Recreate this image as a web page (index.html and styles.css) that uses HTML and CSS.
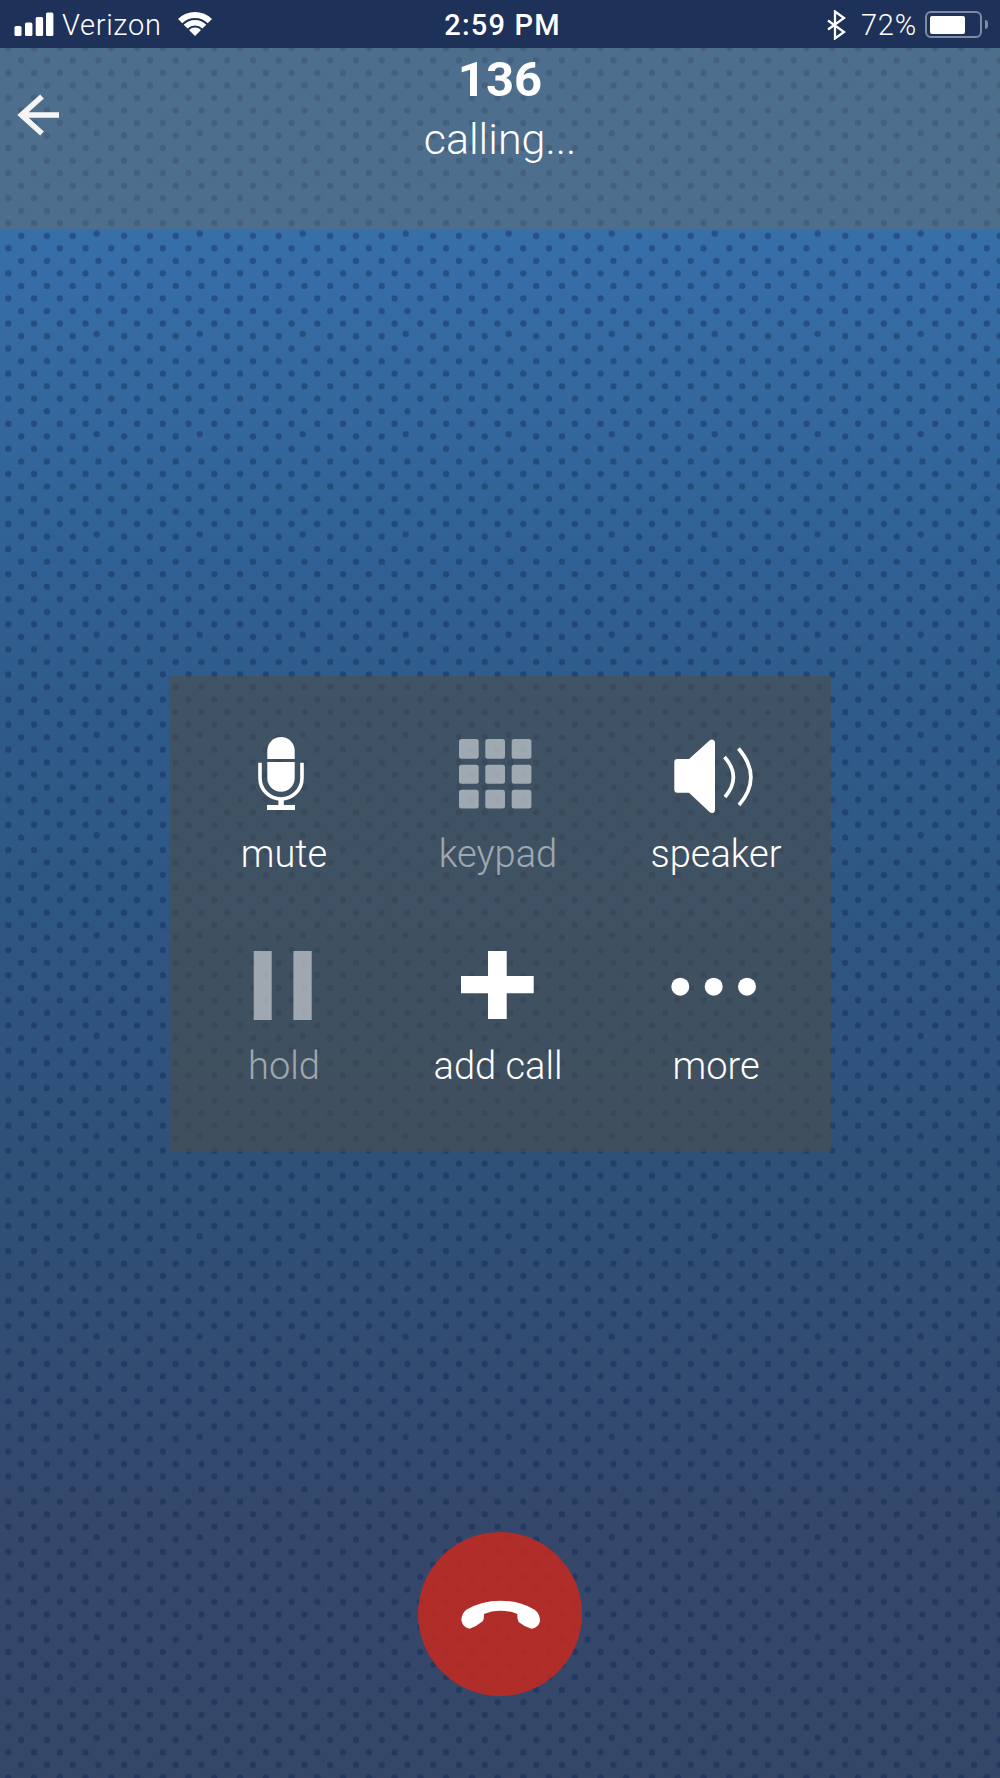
FILE: index.html
```html
<!DOCTYPE html>
<html>
<head>
    <title>calling</title>
    <link rel="stylesheet" href="styles.css">
</head>
<body>
    <div class="screen">
        <div class="status">
            <div class="status-left">
                <svg class="signal" width="40" height="25" viewBox="14 12 40 25">
                    <rect x="14.5" y="26" width="7" height="10" rx="1.5"/>
                    <rect x="25" y="22.5" width="7.4" height="13.5" rx="1.5"/>
                    <rect x="35.7" y="17" width="7.4" height="19" rx="1.5"/>
                    <rect x="46" y="12.5" width="7.4" height="23.5" rx="1.5"/>
                </svg>
                <span class="carrier">Verizon</span>
                <svg class="wifi" width="36" height="25" viewBox="175.3 12 36 25">
                    <path d="M176.33 19.03A24 24 0 0 1 210.27 19.03L206.03 23.27A18 18 0 0 0 180.57 23.27Z"/>
                    <path d="M181.99 24.69A16 16 0 0 1 204.61 24.69L200.72 28.58A10.5 10.5 0 0 0 185.88 28.58Z"/>
                    <path d="M187.29 29.99A8.5 8.5 0 0 1 199.31 29.99L193.3 36Z"/>
                </svg>
            </div>
            <div class="time">2:59 PM</div>
            <div class="status-right">
                <svg class="bluetooth" width="20" height="30" viewBox="827 10 20 30">
                    <path d="M829 20.5L845 32L836 38.5V11.5L845 18L829 29.5"/>
                </svg>
                <span class="percent">72%</span>
                <div class="battery"><div class="battery-fill"></div></div>
                <div class="battery-nub"></div>
            </div>
        </div>

        <div class="header">
            <svg class="back" width="48" height="45" viewBox="15 93 48 45">
                <path d="M59 115H21M42 96.5L21.5 115L42 133.5"/>
            </svg>
            <div class="caller">
                <div class="caller-name">136</div>
                <div class="caller-state">calling...</div>
            </div>
        </div>

        <div class="panel">
            <div class="ctrl">
                <svg class="icon" viewBox="234 733 100 84">
                    <path d="M267.3 759V750.7a13.7 13.7 0 0 1 27.4 0V759Z"/>
                    <path d="M267.3 762H294.7V778a13.7 13.7 0 0 1 -27.4 0Z"/>
                    <path class="line" d="M260 762.7V778a21 21 0 0 0 42 0V762.7"/>
                    <rect x="278.4" y="800" width="5.4" height="6"/>
                    <rect x="267" y="805" width="28" height="5"/>
                </svg>
                <span class="ctrl-label">mute</span>
            </div>
            <div class="ctrl off">
                <svg class="icon" viewBox="448 733 100 84">
                    <rect x="459" y="739" width="19.7" height="19.7" rx="2.5"/>
                    <rect x="485.3" y="739" width="19.7" height="19.7" rx="2.5"/>
                    <rect x="511.7" y="739" width="19.7" height="19.7" rx="2.5"/>
                    <rect x="459" y="764.7" width="19.7" height="19" rx="2.5"/>
                    <rect x="485.3" y="764.7" width="19.7" height="19" rx="2.5"/>
                    <rect x="511.7" y="764.7" width="19.7" height="19" rx="2.5"/>
                    <rect x="459" y="789.7" width="19.7" height="18.7" rx="2.5"/>
                    <rect x="485.3" y="789.7" width="19.7" height="18.7" rx="2.5"/>
                    <rect x="511.7" y="789.7" width="19.7" height="18.7" rx="2.5"/>
                </svg>
                <span class="ctrl-label">keypad</span>
            </div>
            <div class="ctrl">
                <svg class="icon" viewBox="666 733 100 84">
                    <path d="M674.3 762q0 -3 3 -3H689L709.5 740.5q2 -1.5 4 -.5q1.5 .8 1.5 3V809.5q0 2.5 -1.5 3.2q-2 1 -4 -.7L689 792.7H677.3q-3 0 -3 -3Z"/>
                    <path class="line" d="M724.5 757Q742 777 725 797"/>
                    <path class="line" d="M738.5 748.5Q763 777 739 805"/>
                </svg>
                <span class="ctrl-label">speaker</span>
            </div>
            <div class="ctrl off">
                <svg class="icon" viewBox="234 945 100 84">
                    <rect x="253.7" y="951" width="18" height="69"/>
                    <rect x="293.4" y="951" width="18.3" height="69"/>
                </svg>
                <span class="ctrl-label">hold</span>
            </div>
            <div class="ctrl">
                <svg class="icon" viewBox="448 945 100 84">
                    <path d="M488 951H506.7V976H533.7V993.3H506.7V1019H488V993.3H461V976H488Z"/>
                </svg>
                <span class="ctrl-label">add call</span>
            </div>
            <div class="ctrl">
                <svg class="icon" viewBox="666 945 100 84">
                    <circle cx="680.3" cy="986.7" r="9"/>
                    <circle cx="713.7" cy="986.7" r="9"/>
                    <circle cx="747" cy="986.7" r="9"/>
                </svg>
                <span class="ctrl-label">more</span>
            </div>
        </div>

        <div class="hangup">
            <svg width="85" height="35" viewBox="170 225 255 105">
                <path d="M205 320Q185 318 180 295Q180 275 195 263Q240 236 297 236Q355 236 400 263Q416 275 416 297Q412 318 390 320Q370 315 352 300Q347 290 348 276Q325 266 297 266Q270 266 248 276Q249 290 244 298Q225 314 205 320Z"/>
            </svg>
        </div>
    </div>
</body>
</html>
```

FILE: styles.css
```css
*{margin: 0; padding: 0; box-sizing: border-box;}
body{font-family: Roboto, "Liberation Sans", sans-serif; color: #fff;}

.screen{width: 1000px; height: 1778px; overflow: hidden;
    background-image:
        url("data:image/svg+xml,%3Csvg xmlns='http://www.w3.org/2000/svg' width='1000' height='1778'%3E%3Cdefs%3E%3Cpattern id='d' y='3.1' width='103' height='100.27' patternUnits='userSpaceOnUse'%3E%3Cpath fill='none' stroke='rgba(10,35,80,.38)' stroke-width='6.4' stroke-linecap='round' d='M21.2 7.1h0M46.95 7.1h0M72.7 7.1h0M98.45 7.1h0M8.3 19.63h0M34.05 19.63h0M59.8 19.63h0M85.55 19.63h0M21.2 32.17h0M46.95 32.17h0M72.7 32.17h0M96.7 30h0M8.3 44.7h0M34.05 44.7h0M59.8 44.7h0M85.55 44.7h0M21.2 57.23h0M46.95 57.23h0M72.7 57.23h0M98.45 57.23h0M8.3 69.77h0M34.05 69.77h0M59.8 69.77h0M85.55 69.77h0M21.2 82.3h0M46.95 82.3h0M72.7 82.3h0M98.45 82.3h0M8.3 94.83h0M34.05 94.83h0M59.8 94.83h0M85.55 94.83h0'/%3E%3C/pattern%3E%3C/defs%3E%3Crect width='1000' height='1778' fill='url(%23d)'/%3E%3C/svg%3E"),
        linear-gradient(#376fa9 0, #376fa9 229px, #2e5b8b 700px, #2f5077 1200px, #34486c 1500px, #344769 1778px);
    background-repeat: no-repeat;}

/* status bar */
.status{height: 48px; background: #1e3158; padding: 0 12px 0 14px;
    display: grid; grid-template-columns: 1fr auto 1fr; align-items: start;
    font-size: 29px; line-height: 48px;}
.status svg{fill: #fff; flex: none;}
.status-left{display: flex; align-items: flex-start;}
.signal{margin-top: 12px;}
.carrier{margin: 1px 0 0 8px; letter-spacing: .7px; font-weight: 300;}
.wifi{margin: 12px 0 0 15px;}
.time{font-weight: 500; margin: 1px 0 0 3px; letter-spacing: 1.2px;}
.status-right{display: flex; align-items: flex-start; justify-content: flex-end;}
.status .bluetooth{fill: none; stroke: #fff; stroke-width: 2.3; margin-top: 10px;}
.percent{margin: 1px 0 0 15px; font-weight: 300; letter-spacing: .8px;}
.battery{width: 57px; height: 27px; margin: 11px 0 0 8px; padding: 2.5px;
    border: 2px solid #7e8ba3; border-radius: 6px;}
.battery-fill{width: 35px; height: 18px; background: #fff; border-radius: 2px;}
.battery-nub{width: 3px; height: 9px; margin: 20px 0 0 3px; background: #7e8ba3;
    border-radius: 0 3px 3px 0;}

/* caller */
.header{height: 181px; background: rgba(99,109,113,.5);
    display: grid; grid-template-columns: 1fr auto 1fr;}
.back{margin: 45px 0 0 15px; fill: none; stroke: #f5f5f5; stroke-width: 5.6;}
.caller{text-align: center; padding-top: 4px;}
.caller-name{font-size: 49px; line-height: 56px; font-weight: 700;}
.caller-state{font-size: 43px; line-height: 48px; font-weight: 300; margin-top: 7px;}

/* buttons */
.panel{width: 662px; height: 476px; margin: 447px 0 0 169px; padding: 57px 0 0 8px;
    background: rgba(75,78,76,.6);
    display: grid; grid-template-columns: 214px 214px 222px; grid-auto-rows: 143px; row-gap: 69px;}
.ctrl{display: flex; flex-direction: column; align-items: center;}
.icon{width: 100px; height: 84px; fill: #fff;}
.icon .line{fill: none; stroke: #fff; stroke-width: 3.6;}
.ctrl-label{font-size: 38px; line-height: 44px; font-weight: 300; margin-top: 15px;}
.off .icon, .off .ctrl-label{opacity: .5;}

/* end call */
.hangup{width: 164px; height: 164px; margin: 380px auto 0; border-radius: 50%;
    background: rgba(190,42,34,.9);
    display: flex; align-items: center; justify-content: center;}
.hangup svg{fill: #fff;}
```
